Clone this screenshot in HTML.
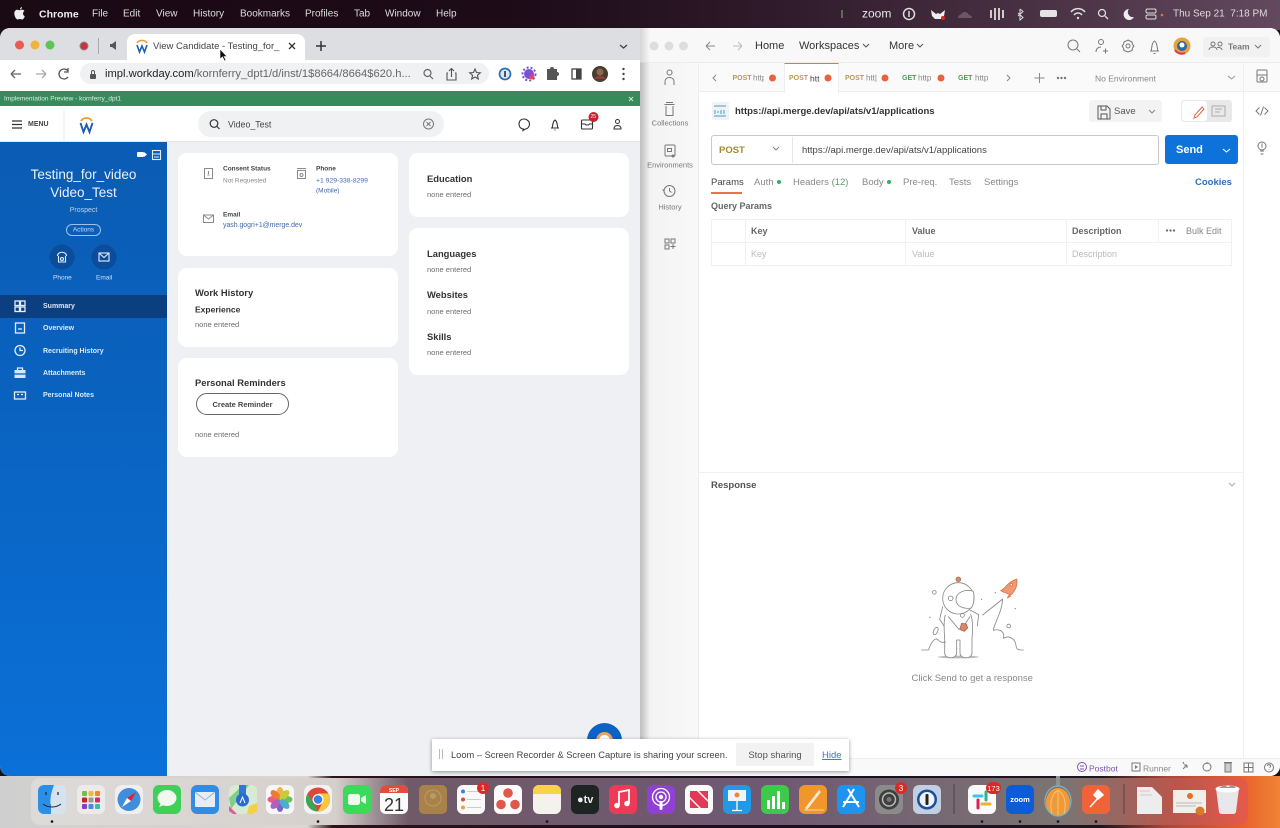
<!DOCTYPE html>
<html><head><meta charset="utf-8"><style>
*{box-sizing:border-box}
html,body{margin:0;padding:0;width:1280px;height:828px;overflow:hidden;background:#1a1018;font-family:"Liberation Sans",sans-serif}
body{filter:blur(.35px)}
.a{position:absolute}
.t{position:absolute;white-space:nowrap;transform:translateY(calc(-50% + .7px));line-height:1}
svg{position:absolute;overflow:visible}
.card{position:absolute;background:#fff;border-radius:9px;width:220px}
.h{font-weight:700;color:#333;font-size:9.400px}
.n{color:#6d6d6d;font-size:7.500px}
.s{font-size:7px;color:#444;font-weight:700}
.side{font-size:7px;font-weight:700;color:#dbe8f8}
.ps{color:#777;font-size:7.500px;transform:translate(-50%,-50%)}
</style></head><body>
<div class="a" style="left:0;top:0;width:1280px;height:30px;background:linear-gradient(90deg,#1a0a14 0,#1d0b18 40%,#2e1a2a 60%,#4e3649 85%,#64495e 100%)"></div>
<div class="a" style="left:0;top:776px;width:1280px;height:52px;background:linear-gradient(90deg,#cfcfcf 0,#d9d6d3 24%,#2a1218 26%,#1a1020 60%,#1b1620 86%,#a8453a 91%,#e8602c 97%,#f08434 100%)"></div>

<svg style="left:14px;top:7px" width="11" height="13" viewBox="0 0 11 13"><path fill="#eee" d="M8 0C7 .2 6 1 5.900 2.400 7 2.400 8 1.400 8 0zM5.700 3.200C4.800 3.200 4.200 2.700 3.300 2.700 1.800 2.700 .3 4 .3 6.400c0 2.700 1.900 6.100 3.300 6.100.8 0 1.200-.5 2.200-.5s1.300.5 2.200.5c1.300 0 2.400-2 2.800-3.300-1.100-.5-1.800-1.500-1.800-2.700 0-1.100.6-1.900 1.500-2.500-.6-.9-1.600-1.400-2.600-1.400-1 0-1.600.6-2.200.6z"/></svg>
<div class="t" style="left:39px;top:14px;font-size:10.500px;font-weight:700;color:#eee">Chrome</div>
<div class="t" style="left:92px;top:14px;font-size:10px;color:#ddd">File</div>
<div class="t" style="left:123px;top:14px;font-size:10px;color:#ddd">Edit</div>
<div class="t" style="left:156px;top:14px;font-size:10px;color:#ddd">View</div>
<div class="t" style="left:193px;top:14px;font-size:10px;color:#ddd">History</div>
<div class="t" style="left:240px;top:14px;font-size:10px;color:#ddd">Bookmarks</div>
<div class="t" style="left:305px;top:14px;font-size:10px;color:#ddd">Profiles</div>
<div class="t" style="left:354px;top:14px;font-size:10px;color:#ddd">Tab</div>
<div class="t" style="left:385px;top:14px;font-size:10px;color:#ddd">Window</div>
<div class="t" style="left:436px;top:14px;font-size:10px;color:#ddd">Help</div>
<div class="t" style="left:862px;top:13px;font-size:12px;color:#e8e8e8">zoom</div>
<div class="t" style="left:1173px;top:14px;font-size:10px;color:#ddd">Thu Sep 21&nbsp; 7:18 PM</div>
<svg style="left:830px;top:0" width="340" height="28" fill="none" stroke="#ddd">
<path d="M12 10v8" stroke="#665" stroke-width="2"/>
<circle cx="79" cy="14" r="5.500" stroke-width="1.500"/><path d="M79 11v6" stroke-width="1.500"/>
<path d="M101 10l5 4 2-1 2 1 5-4-1 6-3 3h-6l-3-3z" fill="#eee" stroke="none"/><circle cx="113" cy="18" r="2" fill="#d22" stroke="none"/>
<path d="M128 18c0-3 3-3 4-5 2-2 6-1 7 2 2 0 3 2 3 3z" fill="#6b5668" stroke="none"/>
<path d="M161 10v8M165 8v12M169 8v12M173 10v8" stroke-width="1.800"/>
<path d="M190 9l3 2.500-5 4.500M190 9v11l3-2.500-5-4.500" stroke-width="1"/>
<rect x="210" y="10" width="17" height="7" rx="2" fill="#e4e4e4" stroke="none"/>
<path d="M241 12a9 9 0 0 1 14 0M244 15a5 5 0 0 1 8 0" stroke-width="1.500"/><circle cx="248" cy="18" r="1.200" fill="#ddd" stroke="none"/>
<circle cx="272" cy="13" r="3.500" stroke-width="1.300"/><path d="M275 16l3 3" stroke-width="1.300"/>
<path d="M299 9a5.500 5.500 0 1 0 5 8 5 5 0 0 1-5-8z" fill="#eee" stroke="none"/>
<rect x="316" y="9" width="10" height="4" rx="1.500" stroke-width="1"/><rect x="316" y="15" width="10" height="4" rx="1.500" stroke-width="1"/><circle cx="332" cy="15" r="1.300" fill="#e07a30" stroke="none"/>
</svg>

<div class="a" style="left:0;top:28px;width:640px;height:748px;background:#eef0f3;border-radius:10px 0 0 10px;overflow:hidden">
<div class="a" style="left:0;top:0;width:640px;height:32px;background:#dcdee2"></div>
<div class="a" style="left:127px;top:6px;width:178px;height:26px;background:#fff;border-radius:8px 8px 0 0"></div>
<div class="a" style="left:0;top:32px;width:640px;height:31px;background:#fff"></div>
<div class="a" style="left:0;top:63px;width:640px;height:15px;background:#378a5c"></div>
<div class="a" style="left:0;top:78px;width:640px;height:36px;background:#fff;border-bottom:1px solid #e4e6ea"></div>
<div class="a" style="left:0;top:114px;width:167px;height:634px;background:linear-gradient(180deg,#0b5cb3 0,#0a62bf 40%,#0b70d8 100%)"></div>
<div class="a" style="left:0;top:267px;width:167px;height:23px;background:#0c3f80"></div>
</div>

<svg style="left:0;top:28px" width="640" height="114" fill="none">
<circle cx="19.500" cy="17" r="4.500" fill="#ec5a54"/><circle cx="35" cy="17" r="4.500" fill="#f2b33a"/><circle cx="50" cy="17" r="4.500" fill="#5dc653"/>
<circle cx="84" cy="18" r="4" fill="#c9333c" stroke="#888" stroke-width="1"/>
<path d="M98.500 10v16" stroke="#aaa"/>
<path d="M110 16h2l4-3v9l-4-3h-2z" fill="#555"/>
<path d="M137 15a6 6 0 0 1 10 0" stroke="#ef9a2d" stroke-width="1.500"/><path d="M137 17l2.500 7 2.500-6 2.500 6 2.500-7" stroke="#1d5cae" stroke-width="1.600"/>
<path d="M289 15l6 6M295 15l-6 6" stroke="#333" stroke-width="1.300"/>
<path d="M321 13v10M316 18h10" stroke="#333" stroke-width="1.500"/>
<path d="M620 17l3.500 3 3.500-3" stroke="#444" stroke-width="1.300"/>
<path d="M21 46h-10M11 46l4-4M11 46l4 4" stroke="#666" stroke-width="1.300"/>
<path d="M36 46h10M46 46l-4-4M46 46l-4 4" stroke="#aaa" stroke-width="1.300"/>
<path d="M68 43a5 5 0 1 0 0 6M68 40v4h-4" stroke="#555" stroke-width="1.300"/>
<rect x="80" y="35" width="409" height="21" rx="10.500" fill="#f0f1f3"/>
<rect x="90" y="46" width="6" height="5" rx="1" fill="#555"/><path d="M91.500 46v-2a1.500 1.500 0 0 1 3 0v2" stroke="#555"/>
<circle cx="427.500" cy="45" r="3.500" stroke="#666" stroke-width="1.200"/><path d="M430 48l3 3" stroke="#666" stroke-width="1.200"/>
<path d="M448 45h-1v7h9v-7h-1M451.500 49v-8M449 43l2.500-2.500 2.500 2.500" stroke="#555" stroke-width="1.100"/>
<path d="M475 41l1.500 3.500 3.800.3-2.900 2.500.9 3.700-3.300-2-3.300 2 .9-3.700-2.900-2.500 3.800-.3z" stroke="#555" stroke-width="1.100"/>
<circle cx="505" cy="46" r="5.500" stroke="#2b6dbb" stroke-width="1.700" fill="#dbe8f5"/><path d="M505 43v6" stroke="#222" stroke-width="1.500"/>
<circle cx="529" cy="46" r="5" fill="#7a52d1"/><circle cx="529" cy="46" r="6.500" stroke="#7a52d1" stroke-dasharray="2 2" stroke-width="2"/><circle cx="532" cy="49" r="2.500" fill="#e2446a"/>
<path d="M547 43h3a2 2 0 0 1 4 0h3v3a2 2 0 0 1 0 4v4h-10z" fill="#555" transform="translate(0 -2)"/>
<rect x="572" y="41" width="9" height="10" stroke="#444" stroke-width="1.300"/><rect x="576" y="41" width="5" height="10" fill="#444"/>
<circle cx="600" cy="46" r="8" fill="#4a3a30"/><circle cx="600" cy="44" r="3.500" fill="#8a6a50"/><path d="M594 51a7 7 0 0 1 12 0" fill="#86403a"/>
<circle cx="623.500" cy="41" r="1.200" fill="#444"/><circle cx="623.500" cy="46" r="1.200" fill="#444"/><circle cx="623.500" cy="51" r="1.200" fill="#444"/>
<path d="M629 69l4 4M633 69l-4 4" stroke="#cfe5d7"/>
<path d="M12 93h10M12 96.500h10M12 100h10" stroke="#333" stroke-width="1.300"/>
<path d="M64 81v32" stroke="#eee"/>
<path d="M81 93a6.500 6.500 0 0 1 11 0" stroke="#ef9a2d" stroke-width="1.800"/><path d="M80.500 95l3 9 3-7.500 3 7.500 3-9" stroke="#1d5cae" stroke-width="1.900"/>
<rect x="198" y="83" width="246" height="26" rx="13" fill="#f0f1f3"/>
<circle cx="214" cy="95.500" r="3.800" stroke="#333" stroke-width="1.200"/><path d="M217 98.500l2.500 2.500" stroke="#333" stroke-width="1.200"/>
<circle cx="428.500" cy="96" r="5" stroke="#777"/><path d="M426.500 94l4 4M430.500 94l-4 4" stroke="#777"/>
<path d="M524 91c-3 0-5 2-5 5s2 5 4.500 5l-.5 1.500 2.500-1.500c2.500-.3 4-2.500 4-5s-2.500-5-5.500-5z" stroke="#333" stroke-width="1.100"/>
<path d="M551 100h8M552 100c1-1 0-6 3-8 3 2 2 7 3 8M554.500 102h1" stroke="#333" stroke-width="1.100"/>
<rect x="581.500" y="92" width="11" height="9" rx="1" stroke="#333" stroke-width="1.100"/><path d="M581.500 96h3.500l1 1h2.500l1-1h3" stroke="#333"/>
<circle cx="593.500" cy="89" r="5" fill="#c8202c"/>
<circle cx="617.500" cy="93.500" r="2" stroke="#333"/><path d="M614 101c0-2 1-3.500 3.500-3.500s3.500 1.500 3.500 3.500z" stroke="#333"/>
</svg>
<div class="t" style="left:153px;top:46px;font-size:9.500px;color:#444">View Candidate - Testing_for_</div>
<div class="t" style="left:105px;top:74px;font-size:11.200px;color:#222">impl.workday.com<span style="color:#666">/kornferry_dpt1/d/inst/1$8664/8664$620.h...</span></div>
<div class="t" style="left:4px;top:98.500px;font-size:6.500px;color:#d9efe2">Implementation Preview - kornferry_dpt1</div>
<div class="t" style="left:28px;top:124px;font-size:7px;font-weight:700;color:#444">MENU</div>
<div class="t" style="left:228px;top:124px;font-size:8.800px;color:#444">Video_Test</div>
<div class="t" style="left:590.500px;top:117px;font-size:5px;color:#fff">25</div>
<svg style="left:218px;top:48px" width="12" height="16"><path d="M2 1v10l2.500-2 2 4 1.500-.8-2-3.700h3z" fill="#111" stroke="#fff" stroke-width=".6"/></svg>

<!-- sidebar -->
<div class="t" style="left:0;width:167px;text-align:center;top:174px;font-size:13.500px;color:#e8f1fb">Testing_for_video</div>
<div class="t" style="left:0;width:167px;text-align:center;top:192px;font-size:13.500px;color:#e8f1fb">Video_Test</div>
<div class="t" style="left:0;width:167px;text-align:center;top:210px;font-size:7px;color:#b9d4f0">Prospect</div>
<div class="a" style="left:66px;top:224px;width:35px;height:12px;border:1px solid #9cc2ea;border-radius:6px"></div>
<div class="t" style="left:66px;width:35px;text-align:center;top:230px;font-size:6.500px;color:#c5dbf3">Actions</div>
<div class="t" style="left:53px;top:278px;font-size:6.500px;color:#cfe0f5">Phone</div>
<div class="t" style="left:96px;top:278px;font-size:6.500px;color:#cfe0f5">Email</div>
<div class="t side" style="left:43px;top:306px;">Summary</div>
<div class="t side" style="left:43px;top:328px;">Overview</div>
<div class="t side" style="left:43px;top:351px;">Recruiting History</div>
<div class="t side" style="left:43px;top:373px;">Attachments</div>
<div class="t side" style="left:43px;top:395px;">Personal Notes</div>
<svg style="left:0;top:142px" width="167" height="270" fill="none" stroke="#e4eefa" stroke-width="1.100">
<rect x="137" y="10" width="7" height="5" rx="1" fill="#fff" stroke="none"/><path d="M144 10l3 2.500-3 2.500z" fill="#fff" stroke="none"/>
<rect x="152.500" y="8.500" width="8" height="9"/><path d="M152.500 12h8M154 15h5"/>
<circle cx="62" cy="115" r="12.500" fill="#0b4d9a" stroke="none"/><circle cx="104" cy="115" r="12.500" fill="#0b4d9a" stroke="none"/>
<path d="M57.500 114c0-5 9-5 9 0M58.500 114v6h7v-6" /><circle cx="62" cy="117" r="1.500"/>
<rect x="99" y="111" width="10" height="8"/><path d="M99 111l5 4.500 5-4.500"/>
<g stroke-width="1.300"><rect x="15" y="159" width="4.500" height="4.500"/><rect x="20.500" y="159" width="4.500" height="4.500"/><rect x="15" y="165" width="4.500" height="4.500"/><rect x="20.500" y="165" width="4.500" height="4.500"/>
<rect x="15.500" y="181" width="9" height="10"/><path d="M18 187h4"/>
<circle cx="20" cy="208.500" r="5"/><path d="M20 205.500v3h3"/>
<rect x="14.500" y="228" width="11" height="8" fill="#d7e6f8" stroke="none"/><path d="M17.500 228v-2h5v2" /><path d="M14.500 232h11" stroke="#0a62bf"/>
<rect x="14.500" y="250" width="11" height="7"/><path d="M17 252.500h2M21 252.500h2"/></g>
</svg>

<!-- content cards -->
<div class="card" style="left:178px;top:153px;height:103px"></div>
<div class="card" style="left:178px;top:268px;height:79px"></div>
<div class="card" style="left:178px;top:358px;height:99px"></div>
<div class="card" style="left:409px;top:153px;height:64px"></div>
<div class="card" style="left:409px;top:228px;height:147px"></div>
<svg style="left:200px;top:165px" width="110" height="65" fill="none" stroke="#8a8a8a">
<rect x="4.500" y="3.500" width="8" height="10"/><path d="M7.500 10h2M8.500 6v3"/>
<path d="M97 5.500h9M97.500 5.500v8h8v-8"/><circle cx="101.500" cy="10" r="1.500"/><path d="M97 3.500h9"/>
<rect x="3.500" y="50" width="10" height="7.500"/><path d="M3.500 50l5 4 5-4"/>
</svg>
<div class="t s" style="left:223px;top:169px;font-size:6.500px">Consent Status</div>
<div class="t" style="left:223px;top:180.500px;font-size:6.500px;color:#8a8a8a">Not Requested</div>
<div class="t s" style="left:316px;top:169px;font-size:6.500px">Phone</div>
<div class="t" style="left:316px;top:180.500px;font-size:6.800px;color:#3f69b2">+1 929-338-8299</div>
<div class="t" style="left:316px;top:190.500px;font-size:6.500px;color:#3f69b2">(Mobile)</div>
<div class="t s" style="left:223px;top:215px;font-size:6.500px">Email</div>
<div class="t" style="left:223px;top:226px;font-size:6.900px;color:#3f69b2">yash.gogri+1@merge.dev</div>
<div class="t h" style="left:195px;top:292px">Work History</div>
<div class="t h" style="left:195px;top:309px;font-size:8.500px">Experience</div>
<div class="t n" style="left:195px;top:324px">none entered</div>
<div class="t h" style="left:195px;top:382px">Personal Reminders</div>
<div class="a" style="left:196px;top:393px;width:93px;height:22px;border:1px solid #666;border-radius:11px;background:#fff"></div>
<div class="t" style="left:196px;width:93px;text-align:center;top:404px;font-size:7.500px;font-weight:700;color:#444">Create Reminder</div>
<div class="t n" style="left:195px;top:434px">none entered</div>
<div class="t h" style="left:427px;top:178px">Education</div>
<div class="t n" style="left:427px;top:194px">none entered</div>
<div class="t h" style="left:427px;top:253px">Languages</div>
<div class="t n" style="left:427px;top:269px">none entered</div>
<div class="t h" style="left:427px;top:294px">Websites</div>
<div class="t n" style="left:427px;top:311px">none entered</div>
<div class="t h" style="left:427px;top:336px">Skills</div>
<div class="t n" style="left:427px;top:352px">none entered</div>
<div class="a" style="left:587px;top:723px;width:35px;height:35px;border-radius:50%;background:#0b63c4"></div>
<div class="a" style="left:596px;top:732px;width:17px;height:17px;border-radius:50%;background:#fff;border:3px solid #e9a26a"></div>

<!-- Postman -->
<div class="a" style="left:640px;top:28px;width:640px;height:748px;background:#fff;border-radius:0 10px 10px 0;overflow:hidden">
<div class="a" style="left:0;top:0;width:640px;height:35px;background:#f8f8f8;border-bottom:1px solid #ececec"></div>
<div class="a" style="left:0;top:35px;width:59px;height:713px;background:linear-gradient(90deg,#dcdcdc 0,#f3f3f3 10px,#f9f9f9 100%);border-right:1px solid #eee"></div>
<div class="a" style="left:0;top:0;width:10px;height:748px;background:linear-gradient(90deg,rgba(0,0,0,.14),rgba(0,0,0,0))"></div>
<div class="a" style="left:59px;top:35px;width:581px;height:29px;background:#fafafa;border-bottom:1px solid #eee"></div>
<div class="a" style="left:144px;top:35px;width:55px;height:30px;background:#fff;border-top:1.500px solid #e8734a;border-left:1px solid #eee;border-right:1px solid #eee"></div>
<div class="a" style="left:603px;top:35px;width:1px;height:713px;background:#efefef"></div>
<div class="a" style="left:59px;top:444px;width:544px;height:1px;background:#f2f2f2"></div>
<div class="a" style="left:0;top:730px;width:640px;height:18px;background:#f9f9f9;border-top:1px solid #eee"></div>
<div class="a" style="left:449px;top:72px;width:73px;height:22px;background:#f3f3f3;border-radius:3px"></div>
<div class="a" style="left:541px;top:72px;width:51px;height:22px;background:#e9e9e9;border-radius:3px"></div>
<div class="a" style="left:542px;top:73px;width:25px;height:20px;background:#fff;border-radius:3px"></div>
<div class="a" style="left:563px;top:9px;width:67px;height:20px;background:#f1f1f1;border-radius:3px"></div>
<div class="a" style="left:71px;top:107px;width:448px;height:30px;border:1px solid #c9c9c9;border-radius:3px;background:#fff"></div>
<div class="a" style="left:152px;top:109px;width:1px;height:26px;background:#e6e6e6"></div>
<div class="a" style="left:525px;top:107px;width:73px;height:29px;background:#0e72db;border-radius:3px"></div>
<div class="a" style="left:71px;top:164px;width:31px;height:1.500px;background:#e8734a"></div>
<div class="a" style="left:71px;top:191px;width:521px;height:47px;border:1px solid #f1f1f1"></div>
<div class="a" style="left:71px;top:214px;width:521px;height:1px;background:#f1f1f1"></div>
<div class="a" style="left:105px;top:191px;width:1px;height:47px;background:#f1f1f1"></div>
<div class="a" style="left:265px;top:191px;width:1px;height:47px;background:#f1f1f1"></div>
<div class="a" style="left:426px;top:191px;width:1px;height:47px;background:#f1f1f1"></div>
<div class="a" style="left:518px;top:191px;width:1px;height:23px;background:#f1f1f1"></div>
</div>
<svg style="left:640px;top:28px" width="640" height="748" fill="none" stroke="#777" stroke-width="1">
<circle cx="14" cy="18" r="4.500" fill="#ddd" stroke="none"/><circle cx="29" cy="18" r="4.500" fill="#ddd" stroke="none"/><circle cx="43.500" cy="18" r="4.500" fill="#ddd" stroke="none"/>
<path d="M66 18h9M66 18l4-4M66 18l4 4" stroke="#888"/><path d="M93 18h9M102 18l-4-4M102 18l-4 4" stroke="#bbb"/>
<path d="M223 16l3 3 3-3M277 16l3 3 3-3" stroke="#555"/>
<circle cx="433" cy="17" r="5" /><path d="M437 21l3 3"/>
<circle cx="461" cy="14" r="2.500"/><path d="M456 24c0-3 2-5 5-5M463 23h5M465.500 20.500v5"/>
<circle cx="488" cy="18" r="2"/><path d="M488 12l4 2 .5 2.500 1.500 1.500-1.500 2-.5 2.500-4 1.500-4-1.500-.5-2.500-1.500-2 1.500-1.500.5-2.500z"/>
<path d="M510 23h9M511 23c1-1 0-8 3.500-10 3.500 2 2.500 9 3.500 10M513.500 25.500h2"/>
<circle cx="542" cy="18" r="8.500" fill="#e9a13c" stroke="none"/><circle cx="542" cy="18" r="5" fill="#2b6aa8" stroke="none"/><circle cx="542" cy="17" r="2.500" fill="#fff" stroke="none"/><path d="M535 22a8 8 0 0 0 10 3" stroke="#d33a56" stroke-width="2"/>
<circle cx="573" cy="16" r="2"/><circle cx="580" cy="16" r="2"/><path d="M569 22c0-2 2-3 4-3s4 1 4 3M577 19.500c2-.5 5 .5 5 2.500"/>
<path d="M615 17l3 3 3-3" stroke="#777"/>
<path d="M76 47l-3 3 3 3M367 47l3 3-3 3M394.500 50h10M399.500 45v10" stroke="#888"/>
<circle cx="418" cy="50" r="1.200" fill="#777" stroke="none"/><circle cx="421.500" cy="50" r="1.200" fill="#777" stroke="none"/><circle cx="425" cy="50" r="1.200" fill="#777" stroke="none"/>
<path d="M588 48l3.500 3 3.500-3" stroke="#999"/>
<rect x="617" y="42" width="10" height="12" rx="1"/><path d="M617 47h10"/><circle cx="622" cy="51" r="2" fill="#fff"/>
<circle cx="132.500" cy="50" r="3.500" fill="#e7633d" stroke="none"/><circle cx="188" cy="50" r="3.500" fill="#e7633d" stroke="none"/><circle cx="245" cy="50" r="3.500" fill="#e7633d" stroke="none"/><circle cx="301" cy="50" r="3.500" fill="#e7633d" stroke="none"/>
<circle cx="29.500" cy="44.500" r="2.500"/><path d="M25 57v-3c0-3 2-4.500 4.500-4.500S34 51 34 54v3"/>
<path d="M24.500 76.500h10M26 78v9.500h7V78"/><path d="M26 74.500h7"/>
<rect x="25" y="117" width="10" height="11" rx="1"/><rect x="27.500" y="120.500" width="4" height="3"/><circle cx="33" cy="128" r="1.500" fill="#777" stroke="none"/>
<circle cx="29.500" cy="163" r="5.500"/><path d="M29.500 160v3l2 1.500M24 163l-1.500-1.500"/>
<rect x="25" y="211" width="4" height="4"/><rect x="31" y="211" width="4" height="4"/><rect x="25" y="217" width="4" height="4"/><path d="M33 216v5M30.500 218.500h5"/>
<rect x="72" y="74" width="17" height="18" rx="2" fill="#eff3f5" stroke="none"/>
<path d="M74 78h12M74 88h12" stroke="#4a9dc5"/><path d="M75 86v-4M77 84h2M81 82v4M84 82v4" stroke="#4a9dc5"/>
<path d="M619.500 79.500l-3.500 3.500 3.500 3.500M624.500 79.500l3.500 3.500-3.500 3.500M623.500 78.500l-3 9" stroke="#777"/>
<path d="M458 78h9l3 3v10h-12zM461 78v4h5v-4M461 91v-5h6v5" stroke="#555"/>
<path d="M509 82l3 3 3-3" stroke="#888"/>
<path d="M562 79l2 2-7 8-3 1 1-3z" stroke="#d9684a"/>
<rect x="572" y="78" width="13" height="10" stroke="#aaa"/><path d="M575 81h7M575 84h5" stroke="#aaa"/>
<circle cx="622" cy="118" r="4" /><path d="M620 123h4M620.500 126h3M622 115.500v4"/>
<path d="M133 119l3 3 3-3" stroke="#888"/>
<circle cx="527" cy="202.500" r="1.100" fill="#666" stroke="none"/><circle cx="530.500" cy="202.500" r="1.100" fill="#666" stroke="none"/><circle cx="534" cy="202.500" r="1.100" fill="#666" stroke="none"/>
<circle cx="139" cy="154" r="2" fill="#28b561" stroke="none"/><circle cx="249" cy="154" r="2" fill="#28b561" stroke="none"/>
<path d="M589 455l3 3 3-3" stroke="#aaa"/>
<circle cx="442" cy="739" r="4.500" stroke="#7c52b8"/><path d="M440 738h4M440 741h4" stroke="#7c52b8"/>
<rect x="492" y="735" width="8" height="8" /><path d="M495 737l3 2-3 2z" fill="#777" stroke="none"/>
<path d="M543 741l4-4M547 737h-3M547 737v3M543 734l1 2"/>
<circle cx="567" cy="739" r="4"/><path d="M567 734v2"/>
<rect x="585" y="735" width="6" height="9" fill="#ccc"/><path d="M584 734.500h8"/>
<rect x="604" y="735" width="9" height="9"/><path d="M604 739.500h9M608.500 735v9"/>
<circle cx="629" cy="739.500" r="4.500"/><path d="M629 741v.5M627.500 738a1.500 1.500 0 1 1 2 1.500"/>
</svg>
<div class="t" style="left:755px;top:46px;font-size:11px;color:#333">Home</div>
<div class="t" style="left:799px;top:46px;font-size:11px;color:#333">Workspaces</div>
<div class="t" style="left:889px;top:46px;font-size:11px;color:#333">More</div>
<div class="t" style="left:1228px;top:46px;font-size:8.500px;font-weight:700;color:#777">Team</div>
<div class="t" style="left:732.500px;top:78px;font-size:7px;font-weight:700;color:#b79c45">POST</div>
<div class="t" style="left:753px;top:78px;font-size:8px;color:#888">http</div>
<div class="a" style="left:764px;top:70px;width:5px;height:16px;background:#fafafa"></div>
<div class="t" style="left:789px;top:78px;font-size:7px;font-weight:700;color:#b79c45">POST</div>
<div class="t" style="left:810px;top:78px;font-size:8.500px;color:#444">htt</div>
<div class="t" style="left:845px;top:78px;font-size:7px;font-weight:700;color:#b79c45">POST</div>
<div class="t" style="left:866px;top:78px;font-size:8px;color:#888">htt|</div>
<div class="t" style="left:902px;top:78px;font-size:7px;font-weight:700;color:#4d9b5c">GET</div>
<div class="t" style="left:918px;top:78px;font-size:8px;color:#888">http</div>
<div class="t" style="left:958px;top:78px;font-size:7px;font-weight:700;color:#4d9b5c">GET</div>
<div class="t" style="left:975px;top:78px;font-size:8px;color:#888">http</div>
<div class="t" style="left:1095px;top:78px;font-size:8.500px;color:#888">No Environment</div>
<div class="t ps" style="left:670px;top:123px;">Collections</div>
<div class="t ps" style="left:670px;top:165px;">Environments</div>
<div class="t ps" style="left:670px;top:206.500px;">History</div>
<div class="t" style="left:735px;top:111px;font-size:9.500px;font-weight:700;color:#333">https://api.merge.dev/api/ats/v1/applications</div>
<div class="t" style="left:1114px;top:111px;font-size:9.500px;color:#555">Save</div>
<div class="t" style="left:719px;top:150px;font-size:9.500px;font-weight:700;color:#a38a30">POST</div>
<div class="t" style="left:802px;top:149.500px;font-size:9.500px;color:#444">https://api.merge.dev/api/ats/v1/applications</div>
<div class="t" style="left:1176px;top:150px;font-size:11px;font-weight:700;color:#fff">Send</div>
<svg style="left:1216px;top:135px" width="20" height="29" fill="none"><path d="M7 14l3.500 3 3.500-3" stroke="#fff"/></svg>
<div class="t" style="left:711px;top:182px;font-size:9.500px;color:#444">Params</div>
<div class="t" style="left:754px;top:182px;font-size:9.500px;color:#888">Auth</div>
<div class="t" style="left:793px;top:182px;font-size:9.500px;color:#888">Headers <span style="color:#5f9b6e">(12)</span></div>
<div class="t" style="left:862px;top:182px;font-size:9.500px;color:#888">Body</div>
<div class="t" style="left:903px;top:182px;font-size:9.500px;color:#888">Pre-req.</div>
<div class="t" style="left:949px;top:182px;font-size:9.500px;color:#888">Tests</div>
<div class="t" style="left:984px;top:182px;font-size:9.500px;color:#888">Settings</div>
<div class="t" style="left:1195px;top:182px;font-size:9.500px;font-weight:700;color:#2e6fb8">Cookies</div>
<div class="t" style="left:711px;top:206px;font-size:9px;font-weight:700;color:#666">Query Params</div>
<div class="t" style="left:751px;top:230.500px;font-size:9px;font-weight:700;color:#666">Key</div>
<div class="t" style="left:912px;top:230.500px;font-size:9px;font-weight:700;color:#666">Value</div>
<div class="t" style="left:1072px;top:230.500px;font-size:9px;font-weight:700;color:#666">Description</div>
<div class="t" style="left:1186px;top:230.500px;font-size:9px;color:#888">Bulk Edit</div>
<div class="t" style="left:751px;top:254px;font-size:9px;color:#bbb">Key</div>
<div class="t" style="left:912px;top:254px;font-size:9px;color:#bbb">Value</div>
<div class="t" style="left:1072px;top:254px;font-size:9px;color:#bbb">Description</div>
<div class="t" style="left:711px;top:484.500px;font-size:9.500px;font-weight:700;color:#555">Response</div>
<div class="t" style="left:911.500px;top:677.500px;font-size:9.500px;color:#888">Click Send to get a response</div>
<div class="t" style="left:1089px;top:767.500px;font-size:8.500px;color:#7b54b4">Postbot</div>
<div class="t" style="left:1143px;top:767.500px;font-size:8.500px;color:#888">Runner</div>

<svg style="left:890px;top:560px" width="160" height="130" viewBox="0 0 480 390" fill="none" stroke="#888" stroke-width="2.500" stroke-linejoin="round" stroke-linecap="round">
<ellipse cx="205" cy="291" rx="62" ry="4" fill="#bbb" stroke="none"/>
<circle cx="205" cy="58" r="7" fill="#d9896e" stroke="#b0705c"/>
<path d="M158 140l-9 38 16 24M240 150l26 14-4 34"/>
<path d="M166 165c-5 15-4 45-2 70l0 45c2 18 34 18 36 0v-40h10v40c2 18 34 18 36 0v-45c2-25 4-50-4-72" fill="#fff"/>
<circle cx="205" cy="115" r="47" fill="#fff"/>
<path d="M198 118c0-22 30-32 52-24 4 16 2 38-6 50-22 4-46-4-46-26z" fill="#fff"/>
<circle cx="182" cy="115" r="7"/><circle cx="133" cy="97" r="5.500"/><circle cx="356" cy="198" r="5.500"/>
<path d="M175 170l32 38M240 170l-24 36"/>
<circle cx="217" cy="166" r="6"/>
<path d="M215 190l14 2 4 12-10 10-14-6z" fill="#d9886e" stroke="#a86650"/>
<path d="M278 165l60-48c-2 30-12 50-18 64-4 12-10 22-10 30 20-6 36 6 30 24 16-10 36 0 38 22 2 12 6 13 22 13"/>
<path d="M95 270h20c10-25 20-40 30-30 6 8 14 8 22 6"/>
<ellipse cx="137" cy="213" rx="6" ry="12" transform="rotate(25 137 213)"/>
<path d="M338 95c8-18 24-32 42-38 4 16-4 38-18 48z" fill="#ef9a74" stroke="#d9754a"/>
<circle cx="364" cy="74" r="4" fill="#fff" stroke="#d9754a"/>
<path d="M346 82l-14 10 8 4M358 104l-6 10 10-6" fill="#ef9a74" stroke="#d9754a"/>
<circle cx="120" cy="172" r="1.800" fill="#777" stroke="none"/><circle cx="275" cy="118" r="1.800" fill="#777" stroke="none"/><circle cx="316" cy="98" r="1.800" fill="#777" stroke="none"/><circle cx="376" cy="146" r="1.800" fill="#777" stroke="none"/>
</svg>

<!-- Loom -->
<div class="a" style="left:432px;top:739px;width:417px;height:32px;background:#fff;box-shadow:0 1px 4px rgba(0,0,0,.4)"></div>
<div class="a" style="left:439px;top:749px;width:4px;height:10px;border-left:1px solid #bbb;border-right:1px solid #bbb"></div>
<div class="t" style="left:451px;top:754.500px;font-size:9.300px;color:#444">Loom – Screen Recorder &amp; Screen Capture is sharing your screen.</div>
<div class="a" style="left:736px;top:743px;width:78px;height:23px;background:#f2f2f2"></div>
<div class="t" style="left:736px;width:78px;text-align:center;top:754.500px;font-size:9.500px;color:#555">Stop sharing</div>
<div class="t" style="left:822px;top:754.500px;font-size:9.500px;color:#3a74c4;text-decoration:underline">Hide</div>

<!-- Dock -->
<svg style="left:0;top:776px" width="1280" height="52" viewBox="0 776 1280 52">
<defs><linearGradient id="dk" x1="0" x2="1" y1="0" y2="0"><stop offset="0" stop-color="#dddbd9"/><stop offset=".25" stop-color="#d6d0cc"/><stop offset=".31" stop-color="#6f5a68"/><stop offset=".6" stop-color="#6f5872"/><stop offset=".85" stop-color="#7c7472"/><stop offset=".94" stop-color="#b9564c"/><stop offset="1" stop-color="#e55a4a"/></linearGradient></defs>
<rect x="31" y="778" width="1217" height="47" rx="9" fill="url(#dk)"/>
<path d="M954 784v30M1124 784v30" stroke="#4e4448" stroke-width="1"/>
<g fill="#111"><circle cx="52" cy="821.500" r="1.300"/><circle cx="318" cy="821.500" r="1.300"/><circle cx="547" cy="821.500" r="1.300"/><circle cx="982" cy="821.500" r="1.300"/><circle cx="1020" cy="821.500" r="1.300"/><circle cx="1058" cy="821.500" r="1.300"/><circle cx="1096" cy="821.500" r="1.300"/></g>
<rect x="38" y="785" width="28" height="29" rx="6" fill="#d5e3f1"/><path d="M44 785h10c-3 8-4 14-3.500 19H51v10h-7a6 6 0 0 1-6-6v-17a6 6 0 0 1 6-6z" fill="#2b8fe8"/><path d="M46 792v3M58 792v3" stroke="#222" stroke-width="1.200"/><path d="M43 804c5 4 13 4 18 0" stroke="#222" fill="none" stroke-width="1"/>
<rect x="77" y="785" width="28" height="29" rx="6" fill="#eeeaea"/>
<g><rect x="82" y="791" width="5" height="5" rx="1" fill="#6cc24a"/><rect x="88.500" y="791" width="5" height="5" rx="1" fill="#f0b93a"/><rect x="95" y="791" width="5" height="5" rx="1" fill="#ee8a2a"/><rect x="82" y="797.500" width="5" height="5" rx="1" fill="#c8202c"/><rect x="88.500" y="797.500" width="5" height="5" rx="1" fill="#999"/><rect x="95" y="797.500" width="5" height="5" rx="1" fill="#d02a68"/><rect x="82" y="804" width="5" height="5" rx="1" fill="#8a3cc9"/><rect x="88.500" y="804" width="5" height="5" rx="1" fill="#3a8fe0"/><rect x="95" y="804" width="5" height="5" rx="1" fill="#33c0a8"/></g>
<rect x="115" y="785" width="28" height="29" rx="7" fill="#efefef"/><circle cx="129" cy="799.500" r="11.500" fill="#3f8edb"/><path d="M136 792l-5 9-4-3z" fill="#d23"/><path d="M122 807l5-9 4 3z" fill="#fff"/>
<rect x="153" y="785" width="28" height="29" rx="6" fill="#3dd15a"/><ellipse cx="167" cy="798" rx="9.500" ry="8" fill="#f2f8f0"/><path d="M161 803l-2 4 5-2z" fill="#f2f8f0"/>
<rect x="191" y="785" width="28" height="29" rx="6" fill="#2f8de6"/><rect x="195" y="792" width="20" height="15" rx="1" fill="#e8edf3"/><path d="M195 792l10 8 10-8" fill="none" stroke="#9fb4cb"/>
<rect x="229" y="785" width="28" height="29" rx="6" fill="#d9ead3"/><path d="M229 798l14-13h6l-18 24z" fill="#7dcf8a"/><path d="M239 785h7v10h-7z" fill="#3376d6"/><circle cx="242.500" cy="800" r="6.500" fill="#2b6ad1"/><path d="M229 806l8 8h-4l-4-3z" fill="#e05ca0"/><path d="M249 806l8-3v8l-4 3h-6z" fill="#f4d04a"/>
<path d="M240 803l2.500-6 2.500 6" stroke="#fff" fill="none"/>
<rect x="266" y="785" width="28" height="29" rx="6" fill="#f6f6f6"/>
<g><ellipse cx="280" cy="793" rx="3.500" ry="6" fill="#f2b43a"/><ellipse cx="280" cy="806" rx="3.500" ry="6" fill="#7c63c9"/><ellipse cx="273.500" cy="799.500" rx="6" ry="3.500" fill="#e85a8a"/><ellipse cx="286.500" cy="799.500" rx="6" ry="3.500" fill="#66c05f"/><ellipse cx="275.500" cy="795" rx="3.500" ry="6" transform="rotate(-45 275.500 795)" fill="#ee7a3a"/><ellipse cx="284.500" cy="795" rx="3.500" ry="6" transform="rotate(45 284.500 795)" fill="#c5cc3a"/><ellipse cx="275.500" cy="804" rx="3.500" ry="6" transform="rotate(45 275.500 804)" fill="#b05ec0"/><ellipse cx="284.500" cy="804" rx="3.500" ry="6" transform="rotate(-45 284.500 804)" fill="#4ab0c9"/></g>
<rect x="304" y="785" width="28" height="29" rx="7" fill="#f2f2f2"/><circle cx="318" cy="799.500" r="12" fill="#e0463a"/><path d="M318 811.500a12 12 0 0 1-10.400-18l6 10z" fill="#38a855"/><path d="M318 811.500a12 12 0 0 0 10.400-18h-10.400l4 10z" fill="#f6c93c"/><circle cx="318" cy="799.500" r="5.500" fill="#fff"/><circle cx="318" cy="799.500" r="4.300" fill="#3a80e0"/>
<rect x="343" y="785" width="28" height="29" rx="6" fill="#3dd95a"/><rect x="348" y="794" width="12" height="11" rx="2.500" fill="#f2faf0"/><path d="M361 798l5-3v9l-5-3z" fill="#f2faf0"/>
<rect x="380" y="785" width="28" height="29" rx="6" fill="#fafafa"/><path d="M380 791a6 6 0 0 1 6-6h16a6 6 0 0 1 6 6v2h-28z" fill="#e44a3e"/>
<text x="394" y="792" font-size="5" fill="#fff" text-anchor="middle" font-family="Liberation Sans" font-weight="700">SEP</text><text x="394" y="811" font-size="18" fill="#333" text-anchor="middle" font-family="Liberation Sans">21</text>
<rect x="419" y="785" width="28" height="29" rx="5" fill="#a8824a"/><circle cx="433" cy="798" r="8" fill="none" stroke="#bb9a66"/><circle cx="433" cy="796" r="3" fill="#bb9a66"/>
<rect x="457" y="785" width="28" height="29" rx="6" fill="#fafafa"/><circle cx="463" cy="791.500" r="2" fill="#3a80e0"/><circle cx="463" cy="799.500" r="2" fill="#e0463a"/><circle cx="463" cy="807.500" r="2" fill="#eea13a"/><path d="M467 791.500h14M467 799.500h14M467 807.500h14" stroke="#ccc"/>
<circle cx="483" cy="788" r="6" fill="#d92a2a"/><text x="483" y="791" font-size="8" fill="#fff" text-anchor="middle" font-family="Liberation Sans">1</text>
<rect x="494" y="785" width="28" height="29" rx="6" fill="#fbfbfb"/><circle cx="508" cy="793" r="4.800" fill="#e2574c"/><circle cx="501" cy="804.500" r="4.800" fill="#e2574c"/><circle cx="515" cy="804.500" r="4.800" fill="#e2574c"/>
<rect x="533" y="785" width="28" height="29" rx="6" fill="#f4f2ec"/><path d="M533 791a6 6 0 0 1 6-6h16a6 6 0 0 1 6 6v3h-28z" fill="#f8d24a"/>
<rect x="571" y="785" width="28" height="29" rx="6" fill="#1d2422"/><text x="577" y="803" font-size="11" fill="#eee" font-family="Liberation Sans" font-weight="700">●tv</text>
<rect x="609" y="785" width="28" height="29" rx="6" fill="#ee3a56"/><path d="M619 805v-13l10-2v13" stroke="#fff" stroke-width="1.800" fill="none"/><circle cx="617" cy="805.500" r="2.800" fill="#fff"/><circle cx="627" cy="803.500" r="2.800" fill="#fff"/>
<rect x="647" y="785" width="28" height="29" rx="6" fill="#9040d4"/><circle cx="661" cy="797" r="8.500" fill="none" stroke="#fff" stroke-width="1.300"/><circle cx="661" cy="797" r="5" fill="none" stroke="#fff" stroke-width="1.300"/><circle cx="661" cy="797" r="2.200" fill="#fff"/><rect x="659.500" y="801" width="3" height="9" rx="1.500" fill="#fff"/>
<rect x="685" y="785" width="28" height="29" rx="6" fill="#fafafa"/><path d="M690 791h7l11 11v6h-7l-11-11z" fill="#e23a56"/><path d="M690 799l9 9h-9zM708 800l-9-9h9z" fill="#e23a56"/>
<rect x="723" y="785" width="28" height="29" rx="6" fill="#1f9ae8"/><rect x="728" y="790" width="18" height="11" fill="#eef5fa"/><circle cx="737" cy="795" r="2.500" fill="#e88a3a"/><path d="M737 801v9M732 810.500h10" stroke="#fff" stroke-width="1.300"/>
<rect x="761" y="785" width="28" height="29" rx="6" fill="#3dc94a"/><path d="M767 800h3v9h-3zM772 796h3v13h-3zM777 791h3v18h-3zM782 802h3v7h-3z" fill="#fff"/>
<rect x="799" y="785" width="28" height="29" rx="6" fill="#f0962a"/><path d="M805 808l14-18 2 2-14 18z" fill="#fbe9cf"/><path d="M804 810h20" stroke="#f8d8a0"/>
<rect x="837" y="785" width="28" height="29" rx="6" fill="#1f94ee"/><path d="M843 807l11-18M859 807l-11-18M843 802h16" stroke="#fff" stroke-width="2" fill="none"/>
<rect x="875" y="785" width="28" height="29" rx="7" fill="#8b8b8b"/><circle cx="889" cy="799.500" r="10" fill="#3f3f3f"/><circle cx="889" cy="799.500" r="6.500" fill="none" stroke="#bbb" stroke-width="1.500"/><circle cx="889" cy="799.500" r="2.500" fill="#777"/>
<circle cx="901" cy="788" r="6" fill="#d92a2a"/><text x="901" y="791" font-size="8" fill="#fff" text-anchor="middle" font-family="Liberation Sans">3</text>
<rect x="913" y="785" width="28" height="29" rx="6" fill="#c2cfe0"/><circle cx="927" cy="799.500" r="10" fill="#1a4f9f"/><circle cx="927" cy="799.500" r="7.500" fill="#f0f3f8"/><rect x="925.500" y="794" width="3" height="11" rx="1" fill="#222"/>
<rect x="968" y="785" width="28" height="29" rx="6" fill="#fafafa"/><path d="M974 796h8" stroke="#36c5f0" stroke-width="3" stroke-linecap="round"/><path d="M986 792v8" stroke="#2eb67d" stroke-width="3" stroke-linecap="round"/><path d="M982 804h8" stroke="#ecb22e" stroke-width="3" stroke-linecap="round"/><path d="M978 800v8" stroke="#e01e5a" stroke-width="3" stroke-linecap="round"/>
<rect x="986" y="782" width="15" height="12" rx="6" fill="#d92a2a"/><text x="993.500" y="791" font-size="7.500" fill="#fff" text-anchor="middle" font-family="Liberation Sans">173</text>
<rect x="1006" y="785" width="28" height="29" rx="6" fill="#0d5bd6"/><text x="1020" y="802" font-size="7.500" fill="#fff" text-anchor="middle" font-family="Liberation Sans" font-weight="700">zoom</text>
<rect x="1056" y="776" width="4" height="10" fill="#8c9496"/><ellipse cx="1058" cy="802" rx="12" ry="14" fill="#ef9a3a"/><path d="M1058 790c-6 4-9 12-6 24M1058 790c6 4 9 12 6 24M1058 790v26" fill="none" stroke="#f9c46a"/><ellipse cx="1058" cy="801" rx="13" ry="15" fill="none" stroke="#7ab4c9" stroke-width="1.200"/>
<rect x="1082" y="785" width="28" height="29" rx="6" fill="#f0633a"/><path d="M1090 807l10-11M1098 790l5 5-5 4-4-4z" stroke="#fff" fill="#fff" stroke-width="1.500"/>
<path d="M1137 787h15l10 10v17h-25z" fill="#ededed"/><path d="M1140 791h10M1140 795h12" stroke="#ccc"/>
<rect x="1173" y="790" width="33" height="23" fill="#f2eeea"/><circle cx="1190" cy="796" r="3" fill="#e0702a"/><path d="M1176 803h26M1176 806h20" stroke="#bbb"/><circle cx="1200" cy="811" r="4.500" fill="#d87a2a"/>
<path d="M1216 788h23l-3 24a3 3 0 0 1-3 2h-11a3 3 0 0 1-3-2z" fill="#e8e8ea"/><ellipse cx="1227.500" cy="789" rx="12" ry="3.500" fill="#fff"/><path d="M1219 788l5-3 4 2 5-2 3 3" fill="#999"/>
</svg>
</body></html>
